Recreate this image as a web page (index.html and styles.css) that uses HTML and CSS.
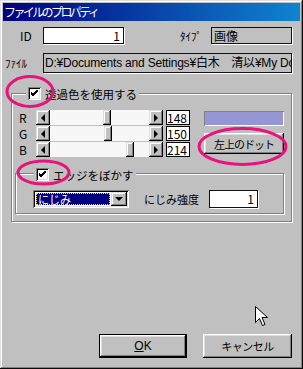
FILE: index.html
```html
<!DOCTYPE html>
<html lang="ja">
<head>
    <meta charset="UTF-8">
    <title>ファイルのプロパティ</title>
    <link rel="stylesheet" href="styles.css">
</head>
<body>
    <div class="window">
        <div class="titlebar">ファイルのプロパティ</div>

        <div class="client">
            <!-- ID / タイプ -->
            <div class="row row-id">
                <span class="lbl lbl-id">ID</span>
                <div class="edit edit-id">1</div>
                <span class="lbl lbl-type">ﾀｲﾌﾟ</span>
                <div class="static static-type">画像</div>
            </div>

            <!-- ファイル -->
            <div class="row row-file">
                <span class="lbl lbl-file">ﾌｧｲﾙ</span>
                <div class="static static-file"><span class="path">D:¥Documents and Settings¥白木　清以¥My Doc</span></div>
            </div>

            <!-- 透過色 -->
            <div class="group group-trans">
                <div class="group-title">
                    <span class="check"><svg width="7" height="7" viewBox="0 0 7 7"><path d="M0 3 L2 5 L7 0 M0 4 L2 6 L7 1 M0 2 L2 4 L7 -1" stroke="#000" stroke-width="1" fill="none"/></svg></span>
                    <span>透過色を使用する</span>
                </div>
                <div class="trans-body">
                    <div class="sliders">
                        <div class="slider-row">
                            <span class="ch">R</span>
                            <div class="scroll">
                                <span class="arrow arrow-left"></span>
                                <div class="track"><span class="thumb" style="margin-left:53px"></span></div>
                                <span class="arrow arrow-right"></span>
                            </div>
                            <div class="value">148</div>
                        </div>
                        <div class="slider-row">
                            <span class="ch">G</span>
                            <div class="scroll">
                                <span class="arrow arrow-left"></span>
                                <div class="track"><span class="thumb" style="margin-left:54px"></span></div>
                                <span class="arrow arrow-right"></span>
                            </div>
                            <div class="value">150</div>
                        </div>
                        <div class="slider-row">
                            <span class="ch">B</span>
                            <div class="scroll">
                                <span class="arrow arrow-left"></span>
                                <div class="track"><span class="thumb" style="margin-left:76px"></span></div>
                                <span class="arrow arrow-right"></span>
                            </div>
                            <div class="value">214</div>
                        </div>
                    </div>
                    <div class="side">
                        <div class="swatch"></div>
                        <div class="btn btn-dot">左上のドット</div>
                    </div>
                </div>

                <!-- エッジ -->
                <div class="group group-edge">
                    <div class="group-title title-edge">
                        <span class="check"><svg width="7" height="7" viewBox="0 0 7 7"><path d="M0 3 L2 5 L7 0 M0 4 L2 6 L7 1 M0 2 L2 4 L7 -1" stroke="#000" stroke-width="1" fill="none"/></svg></span>
                        <span>エッジをぼかす</span>
                    </div>
                    <div class="edge-body">
                        <div class="combo">
                            <div class="combo-text"><span class="focus">にじみ</span></div>
                            <span class="combo-btn"></span>
                        </div>
                        <span class="lbl lbl-blur">にじみ強度</span>
                        <div class="edit edit-blur">1</div>
                    </div>
                </div>
            </div>

            <!-- ボタン -->
            <div class="buttons">
                <div class="btn btn-default"><span class="u">O</span>K</div>
                <div class="btn btn-cancel">キャンセル</div>
            </div>
        </div>

        <!-- 赤丸と矢印カーソル -->
        <svg class="marks" width="303" height="369" viewBox="0 0 303 369">
            <ellipse cx="30" cy="91.5" rx="23" ry="15" fill="none" stroke="#e8137d" stroke-width="3"/>
            <ellipse cx="242.5" cy="146.5" rx="43.5" ry="18" fill="none" stroke="#e8137d" stroke-width="3"/>
            <ellipse cx="43.5" cy="172.5" rx="25.5" ry="11.5" fill="none" stroke="#e8137d" stroke-width="3"/>
            <path d="M255.5 306.5 L255.5 322.5 L259.5 318.5 L262.5 325.5 L265 324.5 L262 317.5 L267.5 317.5 Z" fill="#fff" stroke="#000" stroke-width="1"/>
        </svg>
    </div>
</body>
</html>
```

FILE: styles.css
```css
:root {
    --face: #c0c0c0;
    --shadow: #808080;
    --light: #dfdfdf;
    --navy: #000080;
}

* {
    box-sizing: border-box;
}

body {
    margin: 0;
    background: var(--face);
    font-family: "Noto Sans CJK JP", sans-serif;
    font-size: 11px;
    color: #000;
}

/* Fenêtre */
.window {
    position: relative;
    width: 303px;
    height: 369px;
    padding: 3px;
    display: flex;
    flex-direction: column;
    background: var(--face);
    box-shadow: inset -1px -1px #0a0a0a, inset 1px 1px var(--light),
                inset -2px -2px var(--shadow), inset 2px 2px #fff;
}

.titlebar {
    height: 18px;
    line-height: 17px;
    padding-left: 1px;
    color: #fff;
    font-size: 12px;
    letter-spacing: -2.6px;
    background: linear-gradient(to right, var(--navy), #1084d0);
}

.client {
    flex: 1;
    display: flex;
    flex-direction: column;
}

/* Lignes du haut */
.row {
    display: flex;
    align-items: center;
}

.row-id {
    margin-top: 6px;
    height: 17px;
}

.row-file {
    margin-top: 9px;
    height: 20px;
}

.lbl {
    white-space: nowrap;
}

.lbl-id {
    margin-left: 17px;
    width: 23px;
    font-size: 12px;
}

.lbl-type {
    margin-left: 56px;
    width: 31px;
}

.lbl-file {
    margin-left: 2px;
    width: 38px;
}

.edit,
.static {
    height: 100%;
    border: 1px solid #111;
    box-shadow: 1px 1px 0 #fff;
    line-height: 15px;
    white-space: nowrap;
    overflow: hidden;
}

.edit {
    background: #fff;
    color: #000;
    text-align: right;
    padding-right: 3px;
    font-size: 12px;
}

.edit-id {
    width: 81px;
}

.static-type {
    width: 81px;
    padding-left: 2px;
    font-size: 12px;
}

.static-file {
    width: 249px;
    padding-left: 1px;
    line-height: 18px;
    font-family: "Liberation Sans", "Noto Sans CJK JP", sans-serif;
    font-size: 12px;
}

.path {
    letter-spacing: -0.2px;
}

/* Groupes */
.group {
    display: flex;
    flex-direction: column;
    border: 1px solid var(--shadow);
    box-shadow: inset 1px 1px #fff, 1px 1px 0 #fff;
}

.group-trans {
    margin: 20px 0 0 8px;
    width: 281px;
    padding-bottom: 7px;
}

.group-title {
    align-self: flex-start;
    display: flex;
    align-items: center;
    gap: 4px;
    height: 13px;
    margin: -7px 0 0 14px;
    padding: 0 2px;
    background: var(--face);
    font-size: 11.5px;
    white-space: nowrap;
}

.title-edge {
    margin: -6px 0 0 18px;
}

.check {
    width: 13px;
    height: 13px;
    display: flex;
    align-items: center;
    justify-content: center;
    background: #fff;
    box-shadow: inset 1px 1px var(--shadow), inset -1px -1px #fff,
                inset 2px 2px #000, inset -2px -2px var(--light);
}

/* Curseurs RGB */
.trans-body {
    display: flex;
    margin-top: 10px;
}

.sliders {
    display: flex;
    flex-direction: column;
    gap: 1px;
}

.slider-row {
    display: flex;
    align-items: center;
    height: 15px;
}

.ch {
    width: 24px;
    padding-left: 7px;
    font-size: 12px;
}

.scroll {
    display: flex;
    width: 127px;
    height: 15px;
}

.arrow {
    width: 14px;
    height: 15px;
    display: flex;
    align-items: center;
    justify-content: center;
    background: var(--face);
    box-shadow: inset -1px -1px #000, inset 1px 1px var(--light),
                inset -2px -2px var(--shadow), inset 2px 2px #fff;
}

.arrow::after {
    content: "";
    border-top: 4px solid transparent;
    border-bottom: 4px solid transparent;
}

.arrow-left::after {
    border-right: 4px solid #000;
}

.arrow-right::after {
    border-left: 4px solid #000;
}

.track {
    flex: 1;
    background: #f7f7f7;
}

.thumb {
    display: block;
    width: 8px;
    height: 15px;
    background: var(--face);
    box-shadow: inset -1px -1px #000, inset 1px 1px var(--light),
                inset -2px -2px var(--shadow), inset 2px 2px #fff;
}

.value {
    width: 24px;
    height: 15px;
    margin-left: 3px;
    border: 1px solid #000;
    background: #fff;
    text-align: right;
    padding-right: 2px;
    line-height: 13px;
    font-size: 12px;
}

.side {
    display: flex;
    flex-direction: column;
    margin-left: 14px;
}

.swatch {
    width: 80px;
    height: 15px;
    margin-top: 1px;
    background: #9496d6;
    box-shadow: inset 1px 1px var(--shadow), inset -1px -1px #fff;
}

/* Boutons */
.btn {
    display: flex;
    align-items: center;
    justify-content: center;
    background: var(--face);
    white-space: nowrap;
    box-shadow: inset -1px -1px #000, inset 1px 1px #fff,
                inset -2px -2px var(--shadow), inset 2px 2px var(--light);
}

.btn-dot {
    width: 80px;
    height: 21px;
    margin-top: 7px;
    letter-spacing: -1px;
}

/* Bord flou */
.group-edge {
    margin: 16px 0 0 3px;
    width: 269px;
    padding-bottom: 5px;
}

.edge-body {
    display: flex;
    align-items: center;
    margin-top: 9px;
}

.combo {
    display: flex;
    width: 96px;
    height: 18px;
    margin-left: 17px;
    padding: 2px;
    background: #fff;
    box-shadow: inset 1px 1px var(--shadow), inset -1px -1px #fff,
                inset 2px 2px #000, inset -2px -2px var(--light);
}

.combo-text {
    flex: 1;
    padding: 1px;
}

.focus {
    display: block;
    height: 100%;
    background: var(--navy);
    color: #fff;
    outline: 1px dotted #e0e060;
    outline-offset: -1px;
    line-height: 12px;
    padding-left: 2px;
}

.combo-btn {
    width: 16px;
    display: flex;
    align-items: center;
    justify-content: center;
    background: var(--face);
    box-shadow: inset -1px -1px #000, inset 1px 1px var(--light),
                inset -2px -2px var(--shadow), inset 2px 2px #fff;
}

.combo-btn::after {
    content: "";
    border-left: 4px solid transparent;
    border-right: 4px solid transparent;
    border-top: 4px solid #000;
}

.lbl-blur {
    margin-left: 15px;
    width: 65px;
}

.edit-blur {
    width: 49px;
    height: 18px;
}

.buttons {
    margin-top: auto;
    display: flex;
    justify-content: flex-end;
    gap: 16px;
    padding: 0 8px 8px 0;
}

.buttons .btn {
    height: 24px;
}

.btn-default {
    width: 88px;
    font-family: "Liberation Sans", sans-serif;
    font-size: 12px;
    box-shadow: inset 0 0 0 1px #000, inset -2px -2px #000, inset 2px 2px #fff,
                inset -3px -3px var(--shadow), inset 3px 3px var(--light);
}

.u {
    text-decoration: underline;
}

.btn-cancel {
    width: 89px;
    letter-spacing: -0.5px;
}

/* Annotations */
.marks {
    position: absolute;
    top: 0;
    left: 0;
    pointer-events: none;
}
```
